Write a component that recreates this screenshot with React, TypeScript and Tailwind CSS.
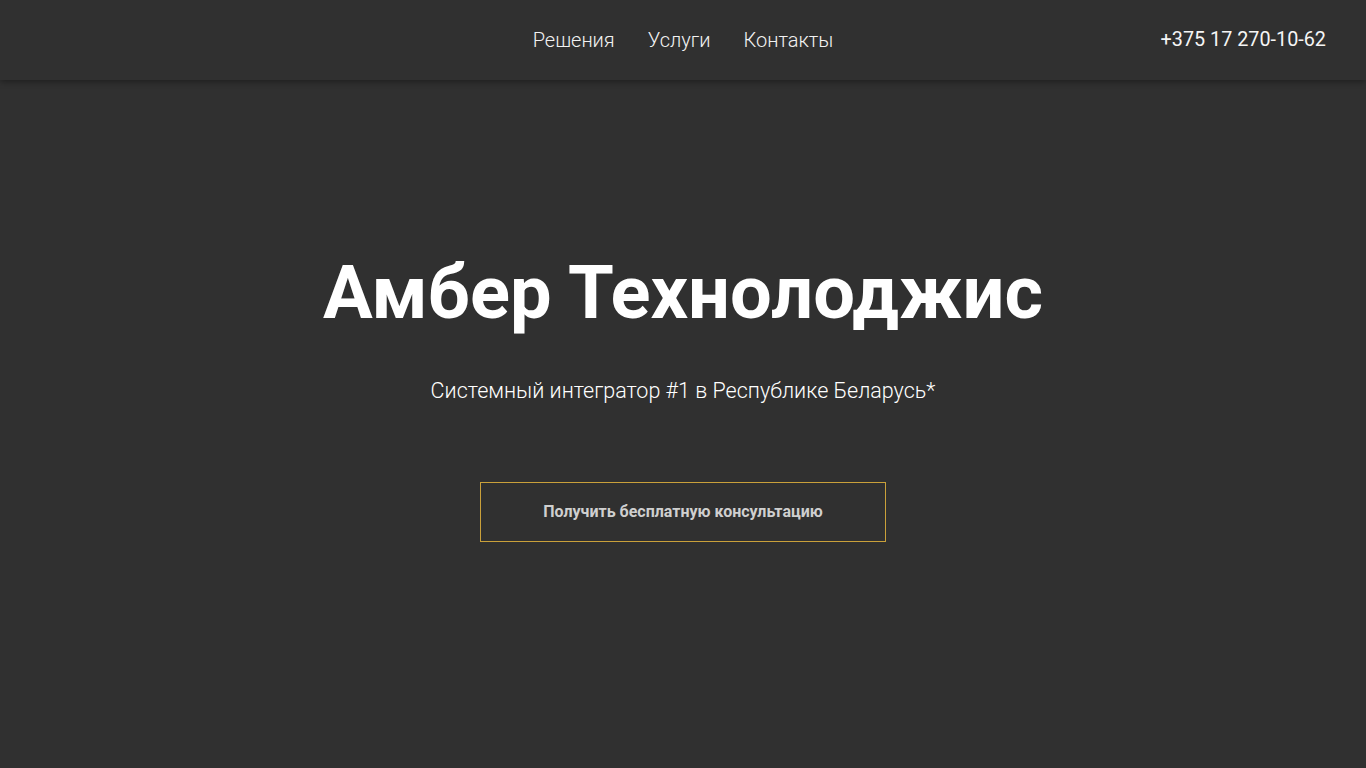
export default function App() {
  const links = ["Решения", "Услуги", "Контакты"];

  return (
    <div className="min-h-screen bg-[#303030] font-['Roboto',sans-serif] text-white">
      <header className="relative z-10 flex h-20 items-center bg-[#303030] px-10 shadow-[0_2px_6px_rgba(0,0,0,0.35)]">
        <div className="flex-1" />
        <nav className="flex items-center gap-[33px] text-xl font-light text-[#f2f2f2]">
          {links.map((label) => (
            <a key={label} href="#">
              {label}
            </a>
          ))}
        </nav>
        <div className="flex flex-1 justify-end text-[19.8px] text-[#f5f5f5]">
          +375 17 270-10-62
        </div>
      </header>

      <main className="flex flex-col items-center pt-[168px]">
        <h1 className="text-[74px] font-bold leading-[90px]">Амбер Технолоджис</h1>
        <p className="mt-[38px] text-[21.5px] font-light leading-[30px]">
          Системный интегратор #1 в Республике Беларусь*
        </p>
        <button className="mt-[76px] h-[60px] w-[406px] border border-[#c9a03a] text-base font-bold text-[#cfcfcf]">
          Получить бесплатную консультацию
        </button>
      </main>
    </div>
  );
}
